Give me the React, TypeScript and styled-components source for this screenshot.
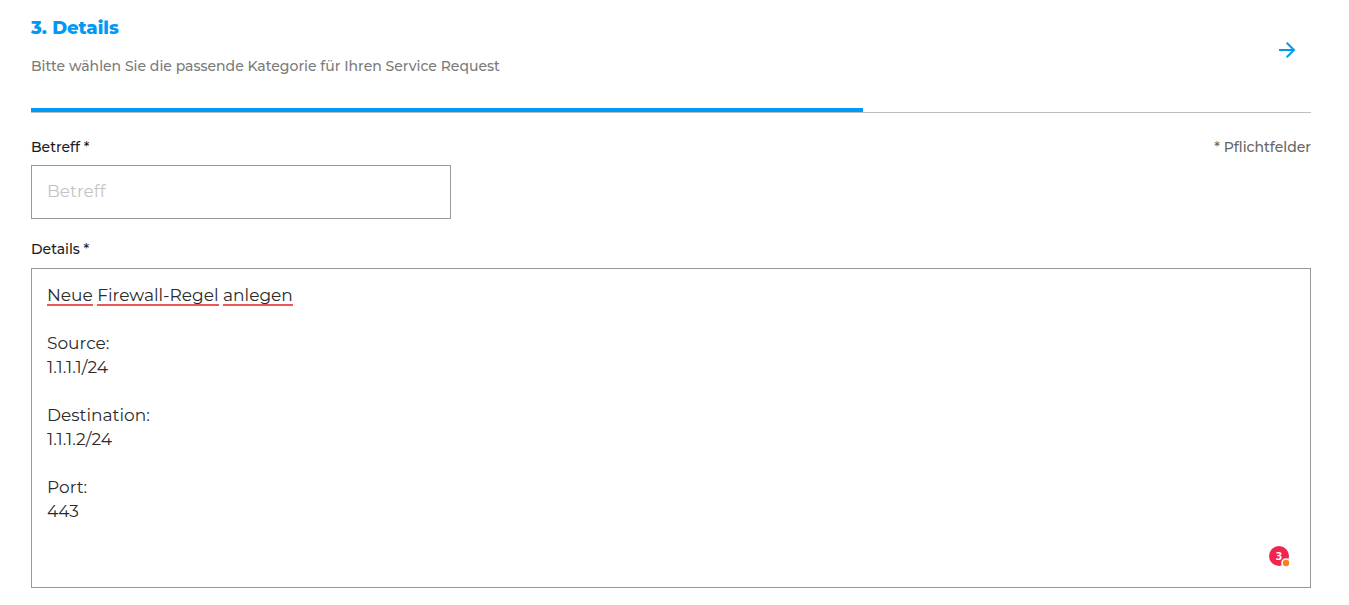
import React, { useLayoutEffect, useRef, useState } from "react";
import styled, { createGlobalStyle } from "styled-components";

const blue = "#0099f5";

const GlobalStyle = createGlobalStyle`
  * { box-sizing: border-box; }
  body {
    margin: 0;
    background: #fff;
    color: #1d1d1f;
    font-family: Montserrat, Inter, "Liberation Sans", sans-serif;
    font-size: 14px;
    line-height: 20px;
  }
`;

const Page = styled.main`
  padding: 16px 38px 16px 31px;
`;

const Header = styled.header`
  display: flex;
  justify-content: space-between;
  align-items: flex-start;
  height: 92px;
`;

const Title = styled.h2`
  margin: 0 0 16px;
  font-size: 18px;
  line-height: 24px;
  font-weight: 800;
  color: ${blue};
`;

const Subtitle = styled.p`
  margin: 0;
  font-weight: 500;
  color: #7b7b7b;
`;

const NextButton = styled.button`
  display: flex;
  margin: 22px 12px 0 0;
  padding: 0;
  border: 0;
  background: none;
  color: ${blue};
  cursor: pointer;
`;

const Track = styled.div`
  height: 5px;
  border-bottom: 1px solid #bdbdbd;
`;

const Bar = styled.div`
  width: 65%;
  height: 4px;
  background: ${blue};
`;

const LabelRow = styled.div`
  display: flex;
  justify-content: space-between;
  margin-top: 24px;
`;

const Label = styled.label`
  display: block;
  font-weight: 500;
`;

const Required = styled.span`
  font-weight: 500;
  color: #666;
`;

const Input = styled.input`
  display: block;
  width: 420px;
  max-width: 100%;
  height: 54px;
  margin: 8px 0 20px;
  padding: 0 15px 2px;
  border: 1px solid #999;
  border-radius: 0;
  font: inherit;
  font-size: 17px;
  color: inherit;
  &::placeholder { color: #c4c4c4; opacity: 1; }
`;

const Editor = styled.div`
  position: relative;
  margin-top: 9px;
`;

const TextArea = styled.textarea`
  display: block;
  width: 100%;
  height: 320px;
  padding: 14px 15px;
  border: 1px solid #999;
  border-radius: 0;
  outline: 0;
  resize: none;
  overflow: hidden;
  font: inherit;
  font-size: 17px;
  line-height: 24px;
  color: #2b2b2b;
`;

const SpellMark = styled.span`
  position: absolute;
  top: 36px;
  height: 2px;
  background: #eb5757;
  pointer-events: none;
`;

const Badge = styled.button`
  position: absolute;
  right: 21px;
  bottom: 21px;
  width: 21px;
  height: 21px;
  padding: 0;
  border: 0;
  background: none;
  cursor: pointer;
`;

const BadgeIcon = styled.svg`
  display: block;
  font-family: "Open Sans", sans-serif;
  font-size: 11px;
  font-weight: 700;
`;

const text = `Neue Firewall-Regel anlegen

Source:
1.1.1.1/24

Destination:
1.1.1.2/24

Port:
443`;

type Mark = { left: number; width: number };

function measureWords(area: HTMLTextAreaElement): Mark[] {
  const context = document.createElement("canvas").getContext("2d");
  if (!context) return [];
  const style = getComputedStyle(area);
  context.font = `${style.fontSize} ${style.fontFamily}`;
  const line = text.split("\n")[0];
  return Array.from(line.matchAll(/\S+/g), (match) => ({
    left: 16 + Math.floor(context.measureText(line.slice(0, match.index)).width),
    width: Math.ceil(context.measureText(match[0]).width),
  }));
}

export default function App() {
  const area = useRef<HTMLTextAreaElement>(null);
  const [marks, setMarks] = useState<Mark[]>([]);

  useLayoutEffect(() => {
    if (area.current) setMarks(measureWords(area.current));
  }, []);

  return (
    <Page>
      <GlobalStyle />
      <Header>
        <div>
          <Title>3. Details</Title>
          <Subtitle>Bitte wählen Sie die passende Kategorie für Ihren Service Request</Subtitle>
        </div>
        <NextButton type="button" aria-label="Weiter">
          <svg width="24" height="24" viewBox="0 0 24 24" fill="none" stroke="currentColor" strokeWidth="2">
            <path d="M4 12h15M11.7 4.7l7.3 7.3-7.3 7.3" />
          </svg>
        </NextButton>
      </Header>
      <Track>
        <Bar />
      </Track>
      <LabelRow>
        <Label htmlFor="subject">Betreff *</Label>
        <Required>* Pflichtfelder</Required>
      </LabelRow>
      <Input id="subject" type="text" placeholder="Betreff" />
      <Label htmlFor="details">Details *</Label>
      <Editor>
        <TextArea id="details" ref={area} defaultValue={text} spellCheck={false} />
        {marks.map((mark) => (
          <SpellMark key={mark.left} style={{ left: mark.left, width: mark.width }} />
        ))}
        <Badge type="button" aria-label="3 Hinweise">
          <BadgeIcon width="21" height="21" viewBox="0 0 21 21">
            <circle cx="10" cy="10" r="10" fill="#f0264f" />
            <text x="10" y="14" textAnchor="middle" fill="#fff">3</text>
            <circle cx="17" cy="17" r="4.8" fill="#fff" />
            <circle cx="17" cy="17" r="3.2" fill="#f5811f" />
          </BadgeIcon>
        </Badge>
      </Editor>
    </Page>
  );
}
